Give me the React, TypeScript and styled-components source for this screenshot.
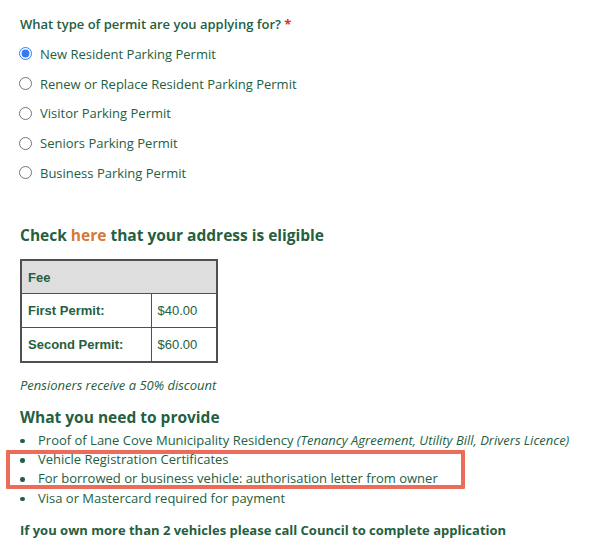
import React from "react";
import styled, { createGlobalStyle } from "styled-components";

const green = "#24603f";

const GlobalStyle = createGlobalStyle`
    body {
        margin: 0;
        background: #ffffff;
        font-family: "Open Sans", "Liberation Sans", sans-serif;
        color: ${green};
    }
`;

const permits = [
    "New Resident Parking Permit",
    "Renew or Replace Resident Parking Permit",
    "Visitor Parking Permit",
    "Seniors Parking Permit",
    "Business Parking Permit",
];

function App() {
    return (
        <Page>
            <GlobalStyle />
            <Question>
                What type of permit are you applying for? <Required>*</Required>
            </Question>
            <RadioList>
                {permits.map((p, i) => (
                    <RadioRow key={p}>
                        <Radio type="radio" name="permit" defaultChecked={i === 0} />
                        <span>{p}</span>
                    </RadioRow>
                ))}
            </RadioList>

            <CheckTitle>
                Check <Link href="#">here</Link> that your address is eligible
            </CheckTitle>

            <FeeTable>
                <tbody>
                    <tr>
                        <HeadCell colSpan={2}>Fee</HeadCell>
                    </tr>
                    <tr>
                        <LabelCell>First Permit:</LabelCell>
                        <ValueCell>$40.00</ValueCell>
                    </tr>
                    <tr>
                        <LabelCell>Second Permit:</LabelCell>
                        <ValueCell>$60.00</ValueCell>
                    </tr>
                </tbody>
            </FeeTable>

            <Note>Pensioners receive a 50% discount</Note>

            <SectionTitle>What you need to provide</SectionTitle>
            <Bullets>
                <Item>
                    Proof of Lane Cove Municipality Residency{" "}
                    <em>(Tenancy Agreement, Utility Bill, Drivers Licence)</em>
                </Item>
                <Highlight>
                    <Item>Vehicle Registration Certificates</Item>
                    <Item>For borrowed or business vehicle: authorisation letter from owner</Item>
                </Highlight>
                <Item>Visa or Mastercard required for payment</Item>
            </Bullets>

            <Footer>If you own more than 2 vehicles please call Council to complete application</Footer>
        </Page>
    );
}

const Page = styled.div`
    display: flex;
    flex-direction: column;
    align-items: flex-start;
    padding: 14px 0 0 20px;
    width: 602px;
    height: 555px;
    box-sizing: border-box;
    overflow: hidden;
`;

const Question = styled.div`
    font-size: 13px;
    font-weight: 600;
    line-height: 20px;
`;

const Required = styled.span`
    color: #e0301e;
    font-weight: 700;
`;

const RadioList = styled.div`
    display: flex;
    flex-direction: column;
    margin-top: 5px;
`;

const RadioRow = styled.label`
    display: flex;
    align-items: center;
    gap: 8px;
    height: 29.75px;
    font-size: 13px;
`;

const Radio = styled.input`
    width: 13px;
    height: 13px;
    margin: 0 0 0 -1px;
    accent-color: #3478f6;
`;

const CheckTitle = styled.h2`
    margin: 35px 0 0;
    font-size: 15.5px;
    font-weight: 700;
    line-height: 24px;
`;

const Link = styled.a`
    color: #d27a36;
    text-decoration: none;
`;

const FeeTable = styled.table`
    margin-top: 12px;
    width: 198px;
    border-collapse: collapse;
    border: 2px solid #505050;
    font-family: "Liberation Sans", Arial, sans-serif;
    font-size: 13px;
    color: ${green};
`;

const Cell = styled.td`
    border: 1px solid #505050;
    height: 34px;
    padding: 0 6px;
    box-sizing: border-box;
`;

const HeadCell = styled(Cell)`
    background: #dedede;
    font-weight: 700;
`;

const LabelCell = styled(Cell)`
    width: 130px;
    font-weight: 700;
`;

const ValueCell = styled(Cell)`
    font-weight: 400;
`;

const Note = styled.div`
    margin-top: 13px;
    font-size: 13px;
    font-style: italic;
    line-height: 18px;
`;

const SectionTitle = styled.h3`
    margin: 12px 0 0;
    font-size: 15.5px;
    font-weight: 700;
    line-height: 22px;
`;

const Bullets = styled.ul`
    margin: 3px 0 0;
    padding: 0;
    list-style: none;
`;

const Item = styled.li`
    position: relative;
    padding-left: 18px;
    font-size: 13px;
    line-height: 19.3px;

    &::before {
        content: "";
        position: absolute;
        left: 0;
        top: 8px;
        width: 4.5px;
        height: 4.5px;
        border-radius: 50%;
        background: ${green};
    }
`;

const Highlight = styled.div`
    position: relative;

    &::after {
        content: "";
        position: absolute;
        left: -14px;
        top: 0;
        width: 459px;
        height: 39px;
        box-sizing: border-box;
        border: 4px solid #ec6b59;
        border-radius: 1px;
        pointer-events: none;
    }
`;

const Footer = styled.div`
    margin-top: 12px;
    font-size: 13px;
    font-weight: 700;
    line-height: 20px;
`;

export default App;
